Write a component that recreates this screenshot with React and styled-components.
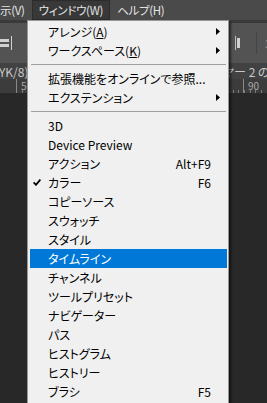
import React from 'react';
import styled, { createGlobalStyle } from 'styled-components';

const GlobalStyle = createGlobalStyle`
  html, body {
    margin: 0;
    padding: 0;
    background: #282828;
    overflow: hidden;
  }
  body {
    font-family: "Noto Sans CJK JP", "Noto Sans", sans-serif;
    font-feature-settings: "palt" 1;
  }
`;

const Screen = styled.div`
  position: relative;
  width: 267px;
  height: 403px;
  display: flex;
  flex-direction: column;
  background: #282828;
  overflow: hidden;
`;

const MenuBar = styled.div`
  height: 20px;
  display: flex;
  align-items: stretch;
  background: #4a4a4a;
  border-bottom: 3px solid #3a3a3a;
  font-size: 11.5px;
  color: #e4e4e4;
`;

const MenuBarItem = styled.div`
  display: flex;
  align-items: center;
  padding: ${(p) => (p.$first ? '0 7px 0 0' : '0 7px')};
  background: ${(p) => (p.$active ? '#383838' : 'transparent')};
  box-shadow: ${(p) => (p.$active ? 'inset 0 0 0 1px #2c2c2c' : 'none')};
  line-height: 20px;
  letter-spacing: -0.3px;
  white-space: nowrap;
`;

const OptionsBar = styled.div`
  height: 40px;
  display: flex;
  align-items: center;
  justify-content: space-between;
  background: #535353;
`;

const OptionsRight = styled.div`
  display: flex;
  align-items: center;
`;

const OptionsNum = styled.span`
  font-size: 11px;
  color: #9a9a9a;
  margin-left: 8px;
  margin-right: -4px;
`;

const TabBar = styled.div`
  height: 16px;
  display: flex;
  align-items: center;
  justify-content: space-between;
  background: #424242;
  font-size: 12px;
  color: #c8c8c8;
  white-space: nowrap;
  overflow: hidden;
`;

const TabLeft = styled.span`
  margin-left: -1px;
`;

const TabRight = styled.span`
  margin-right: -14px;
`;

const Ruler = styled.div`
  position: relative;
  height: 14px;
  background:
    repeating-linear-gradient(to right, #7a7a7a 0 1px, transparent 1px 5.7px) left bottom / 100% 3px no-repeat,
    #3c3c3c;
  background-position: 16px bottom;
`;

const RulerMark = styled.div`
  position: absolute;
  top: 0;
  bottom: 0;
  border-left: 1px solid #8a8a8a;
  padding-left: 4px;
  font-size: 10px;
  line-height: 14px;
  color: #a8a8a8;
`;

const Canvas = styled.div`
  flex: 1;
  background: #282828;
`;

const Dropdown = styled.div`
  position: absolute;
  left: 27px;
  top: 20px;
  width: 202px;
  box-sizing: border-box;
  padding: 1px 1px 2px 2px;
  background: #f0f0f0;
  border: 1px solid #979797;
  box-shadow: 2px 2px 2px rgba(0, 0, 0, 0.55);
  font-size: 12px;
  color: #000;
`;

const Item = styled.div`
  position: relative;
  height: 19px;
  display: flex;
  align-items: center;
  padding-left: 18px;
  background: ${(p) => (p.$hover ? '#0078d7' : 'transparent')};
  color: ${(p) => (p.$hover ? '#fff' : '#000')};
  white-space: nowrap;
`;

const Label = styled.span`
  flex: 1;
  line-height: 19px;
`;

const Shortcut = styled.span`
  line-height: 19px;
`;

const ArrowCell = styled.span`
  width: 16px;
  height: 19px;
  display: flex;
  align-items: center;
  padding-left: 5px;
  box-sizing: border-box;
`;

const Check = styled.svg`
  position: absolute;
  left: 3px;
  top: 6px;
`;

const Separator = styled.div`
  height: 1px;
  margin: 4px 1px 4px 1px;
  background: #a0a0a0;
`;

const SubArrow = () => (
  <svg width="4" height="7" viewBox="0 0 4 7">
    <path d="M0 0 L4 3.5 L0 7 Z" fill="#000" />
  </svg>
);

const CheckMark = () => (
  <Check width="8" height="7" viewBox="0 0 8 7">
    <path d="M0.6 3.4 L3 5.8 L7.4 0.6" fill="none" stroke="#000" strokeWidth="1.8" />
  </Check>
);

const AlignIcon = () => (
  <svg width="13" height="16" viewBox="0 0 13 16">
    <rect x="0" y="4" width="9" height="3" fill="#d0d0d0" />
    <rect x="0" y="9" width="9" height="3" fill="#d0d0d0" />
    <rect x="11" y="1" width="1" height="14" fill="#d0d0d0" />
  </svg>
);

const DistIcon = () => (
  <svg width="10" height="16" viewBox="0 0 10 16">
    <rect x="2" y="1" width="1" height="14" fill="#bcbcbc" />
    <rect x="4" y="3" width="3" height="10" fill="#d0d0d0" />
  </svg>
);

const groups = [
  [
    { label: <>アレンジ(<u>A</u>)</>, sub: true },
    { label: <>ワークスペース(<u>K</u>)</>, sub: true },
  ],
  [
    { label: '拡張機能をオンラインで参照...' },
    { label: 'エクステンション', sub: true },
  ],
  [
    { label: '3D' },
    { label: 'Device Preview' },
    { label: 'アクション', key: 'Alt+F9' },
    { label: 'カラー', key: 'F6', checked: true },
    { label: 'コピーソース' },
    { label: 'スウォッチ' },
    { label: 'スタイル' },
    { label: 'タイムライン', hover: true },
    { label: 'チャンネル' },
    { label: 'ツールプリセット' },
    { label: 'ナビゲーター' },
    { label: 'パス' },
    { label: 'ヒストグラム' },
    { label: 'ヒストリー' },
    { label: 'ブラシ', key: 'F5' },
  ],
];

const rulerMarks = [50, 90];

const WindowMenu = () => (
  <Dropdown>
    {groups.map((group, gi) => (
      <React.Fragment key={gi}>
        {gi > 0 && <Separator />}
        {group.map((it, i) => (
          <Item key={i} $hover={it.hover}>
            {it.checked && <CheckMark />}
            <Label>{it.label}</Label>
            {it.key && <Shortcut>{it.key}</Shortcut>}
            <ArrowCell>{it.sub && <SubArrow />}</ArrowCell>
          </Item>
        ))}
      </React.Fragment>
    ))}
  </Dropdown>
);

const App = () => {
  return (
    <Screen>
      <GlobalStyle />
      <MenuBar>
        <MenuBarItem $first>示(V)</MenuBarItem>
        <MenuBarItem $active>ウィンドウ(W)</MenuBarItem>
        <MenuBarItem>ヘルプ(H)</MenuBarItem>
      </MenuBar>
      <OptionsBar>
        <AlignIcon />
        <OptionsRight>
          <DistIcon />
          <svg width="14" height="22" viewBox="0 0 14 22">
            <rect x="13" y="0" width="1" height="22" fill="#444" />
          </svg>
          <OptionsNum>3</OptionsNum>
        </OptionsRight>
      </OptionsBar>
      <TabBar>
        <TabLeft>YK/8)</TabLeft>
        <TabRight>レイヤー 2 のコ</TabRight>
      </TabBar>
      <Ruler>
        {rulerMarks.map((v) => (
          <RulerMark key={v} style={{ left: 16 + (v - 50) * 5.675 }}>
            {v}
          </RulerMark>
        ))}
      </Ruler>
      <Canvas />
      <WindowMenu />
    </Screen>
  );
};

export default App;
